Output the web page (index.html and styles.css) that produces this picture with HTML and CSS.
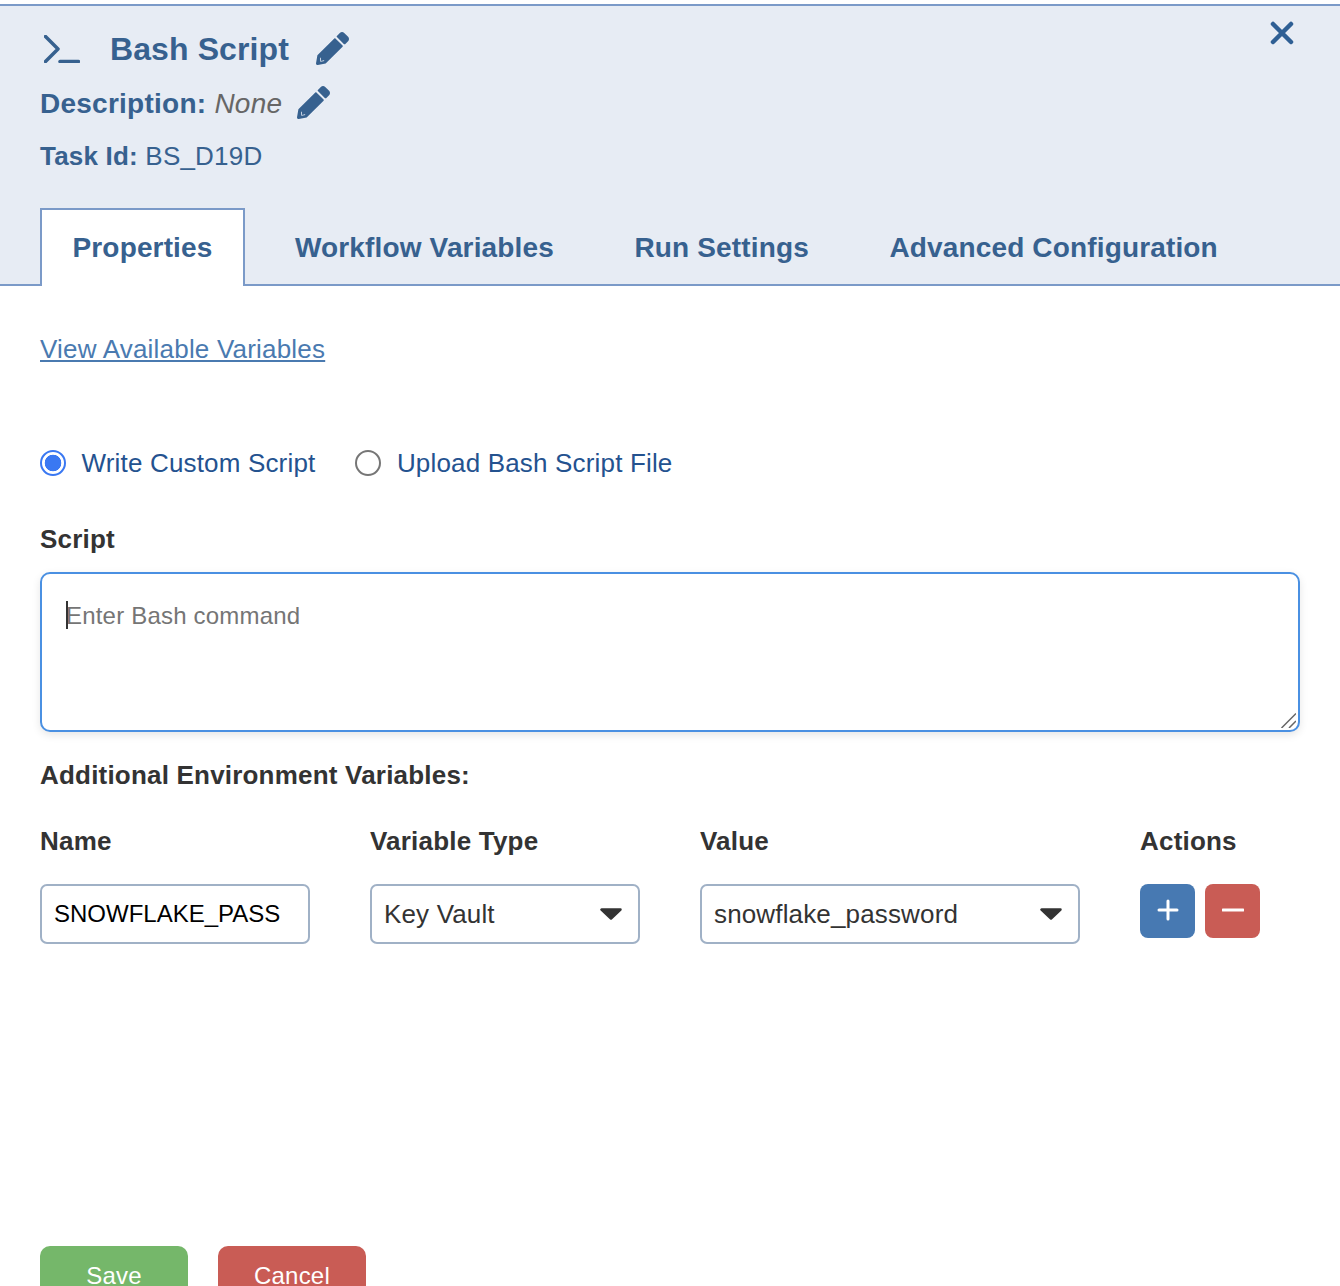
FILE: index.html
```html
<!DOCTYPE html>
<html lang="en">
<head>
<meta charset="utf-8">
<title>Bash Script</title>
<link rel="stylesheet" href="styles.css">
</head>
<body>
<div class="panel">
  <header class="head">
    <svg class="close" viewBox="0 0 24 24" aria-hidden="true"><path d="M3 3L21 21M21 3L3 21"/></svg>
    <div class="title-row">
      <svg class="term" viewBox="0 0 36 28" aria-hidden="true"><path d="M1.500 1.500L14 14L1.500 26.500"/><path d="M16 26.500H34.500"/></svg>
      <h1 class="title">Bash Script</h1>
      <svg class="pencil" viewBox="0 0 512 512" aria-hidden="true"><path fill-rule="evenodd" d="M497.900 142.100l-46.100 46.100c-4.700 4.700-12.300 4.700-17 0l-111-111c-4.700-4.700-4.700-12.300 0-17l46.100-46.100c18.700-18.700 49.100-18.700 67.900 0l60.100 60.100c18.800 18.700 18.800 49.100 0 67.900zM284.200 99.800L21.600 362.400.4 483.900c-2.900 16.400 11.400 30.600 27.800 27.800l121.500-21.300 262.600-262.600c4.700-4.700 4.700-12.300 0-17l-111-111c-4.800-4.700-12.400-4.700-17.100 0zM62 400l6 62 62-12-8-10-42 8-6-50z"/></svg>
    </div>
    <div class="desc-row">
      <span class="desc"><b>Description:</b> <i>None</i></span>
      <svg class="pencil" viewBox="0 0 512 512" aria-hidden="true"><path fill-rule="evenodd" d="M497.900 142.100l-46.100 46.100c-4.700 4.700-12.300 4.700-17 0l-111-111c-4.700-4.700-4.700-12.300 0-17l46.100-46.100c18.700-18.700 49.100-18.700 67.900 0l60.100 60.100c18.800 18.700 18.800 49.100 0 67.900zM284.200 99.800L21.600 362.400.4 483.900c-2.900 16.400 11.400 30.600 27.800 27.800l121.500-21.300 262.600-262.600c4.700-4.700 4.700-12.300 0-17l-111-111c-4.800-4.700-12.400-4.700-17.100 0zM62 400l6 62 62-12-8-10-42 8-6-50z"/></svg>
    </div>
    <div class="task"><b>Task Id:</b> BS_D19D</div>
    <nav class="tabs">
      <a class="tab active">Properties</a>
      <a class="tab">Workflow Variables</a>
      <a class="tab">Run Settings</a>
      <a class="tab">Advanced Configuration</a>
    </nav>
  </header>
  <main class="body">
    <a class="vars-link" href="#">View Available Variables</a>
    <div class="radios">
      <label class="radio"><input type="radio" name="src" checked><span>Write Custom Script</span></label>
      <label class="radio"><input type="radio" name="src"><span>Upload Bash Script File</span></label>
    </div>
    <div class="label script-label">Script</div>
    <div class="script-wrap">
      <textarea class="script" placeholder="Enter Bash command"></textarea>
      <span class="caret"></span>
      <svg class="grip" viewBox="0 0 16 16" aria-hidden="true"><path d="M1.500 16L16 1.500M9 16L16 9"/></svg>
    </div>
    <div class="label env-label">Additional Environment Variables:</div>
    <div class="env-grid">
      <div class="label">Name</div>
      <div class="label">Variable Type</div>
      <div class="label">Value</div>
      <div class="label">Actions</div>
      <input class="field name" type="text" value="SNOWFLAKE_PASS">
      <div class="select">Key Vault<svg class="arrow" viewBox="0 0 24 12" aria-hidden="true"><path d="M2.500 1.500H21.500L12 10.500Z"/></svg></div>
      <div class="select">snowflake_password<svg class="arrow" viewBox="0 0 24 12" aria-hidden="true"><path d="M2.500 1.500H21.500L12 10.500Z"/></svg></div>
      <div class="actions">
        <button class="icon-btn add" aria-label="Add"><svg viewBox="0 0 22 22" aria-hidden="true"><path d="M11 2V20M2 11H20"/></svg></button>
        <button class="icon-btn remove" aria-label="Remove"><svg viewBox="0 0 22 22" aria-hidden="true"><path d="M1 11H21"/></svg></button>
      </div>
    </div>
    <div class="footer">
      <button class="btn save">Save</button>
      <button class="btn cancel">Cancel</button>
    </div>
  </main>
</div>
</body>
</html>
```

FILE: styles.css
```css
* { box-sizing: border-box; }
html, body { margin: 0; height: 1286px; overflow: hidden; background: #fff; }
body { font-family: "Liberation Sans", Arial, sans-serif; font-size: 26px; color: #333; }

.panel { padding-top: 4px; }

.head {
  position: relative;
  height: 282px;
  padding: 0 40px;
  background: #e7ecf4;
  border-top: 2px solid #7b9ac8;
  border-bottom: 2px solid #7b9ac8;
  color: #37618f;
}
.close {
  position: absolute;
  top: 15px;
  right: 46px;
  width: 24px;
  height: 24px;
  fill: none;
  stroke: #2f5f94;
  stroke-width: 4.500;
  stroke-linecap: round;
}
.title-row { display: flex; align-items: center; height: 46px; margin-top: 20px; }
.term {
  width: 36px;
  height: 28px;
  margin: 0 30px 0 4px;
  fill: none;
  stroke: #37618f;
  stroke-width: 3.500;
  stroke-linecap: round;
  stroke-linejoin: round;
}
.title { margin: 0 27px 0 0; font-size: 32px; line-height: 46px; font-weight: 700; letter-spacing: .1px; }
.pencil { width: 33px; height: 33px; margin-bottom: 2px; fill: #37618f; }
.desc-row { display: flex; align-items: center; height: 40px; margin-top: 12px; }
.desc { font-size: 28px; margin-right: 15px; letter-spacing: .25px; }
.desc-row .pencil { margin-bottom: 4px; }
.desc i { color: #666; }
.task { font-size: 26px; line-height: 32px; margin-top: 16px; letter-spacing: .2px; }

.tabs { display: flex; position: absolute; left: 40px; right: 0; bottom: -2px; height: 78px; }
.tab {
  display: flex;
  align-items: center;
  padding: 0 31px;
  margin-right: 14.500px;
  font-size: 28px;
  font-weight: 700;
  letter-spacing: .15px;
  border: 2px solid transparent;
  border-bottom: 0;
}
.tab.active { padding: 0 30.500px; background: #fff; border-color: #7b9ac8; margin-right: 17px; }

.body { padding: 0 40px; }
.vars-link { display: block; margin-top: 46px; font-size: 26px; line-height: 34px; letter-spacing: .2px; color: #4a7ab0; width: max-content; }
.radios { display: flex; gap: 40px; margin-top: 80px; letter-spacing: .17px; }
.radio { display: flex; align-items: center; gap: 15.500px; height: 34px; color: #24528f; }
.radio input {
  appearance: none;
  width: 26px;
  height: 26px;
  margin: 0;
  border: 2px solid #767676;
  border-radius: 50%;
  background: #fff;
}
.radio input:checked {
  border-color: #3a78f2;
  background: radial-gradient(circle, #3a78f2 0 8px, #fff 8.600px);
}
.label { font-weight: 700; font-size: 26px; line-height: 34px; letter-spacing: .2px; color: #333; }
.script-label { margin-top: 42px; }
.script-wrap { position: relative; margin-top: 16px; height: 160px; }
.script {
  display: block;
  width: 100%;
  height: 160px;
  padding: 26px 24px;
  border: 2px solid #4a90e2;
  border-radius: 10px;
  outline: 0;
  resize: none;
  font-family: inherit;
  font-size: 24px;
  letter-spacing: .2px;
  line-height: 32px;
  color: #333;
  box-shadow: 0 3px 8px rgba(0, 0, 0, .1);
}
.script::placeholder { color: #757575; opacity: 1; }
.caret { position: absolute; left: 26px; top: 29px; width: 2px; height: 28px; background: #333; }
.grip { position: absolute; right: 4px; bottom: 4px; width: 16px; height: 16px; fill: none; stroke: #666; stroke-width: 1.500; }
.env-label { margin-top: 26px; }
.env-grid {
  display: grid;
  grid-template-columns: 270px 270px 380px auto;
  column-gap: 60px;
  row-gap: 26px;
  margin-top: 32px;
  align-items: start;
}
.field, .select {
  height: 60px;
  border: 2px solid #a0b1c6;
  border-radius: 7px;
  background: #fff;
  padding: 0 12px;
  font-family: inherit;
  font-size: 26px;
  letter-spacing: .15px;
  color: #333;
}
.field { color: #000; font-size: 24px; letter-spacing: 0; outline: 0; }
.select { display: flex; align-items: center; justify-content: space-between; }
.arrow { width: 24px; height: 12px; margin-right: 3px; fill: #333; stroke: #333; stroke-width: 2.500; stroke-linejoin: round; }
.actions { display: flex; gap: 10px; }
.icon-btn {
  display: flex;
  align-items: center;
  justify-content: center;
  width: 55px;
  height: 54px;
  padding: 0;
  border: 0;
  border-radius: 8px;
}
.icon-btn svg { width: 22px; height: 22px; margin-top: -2px; fill: none; stroke: #fff; stroke-width: 3; stroke-linecap: round; }
.add { background: #4779b2; }
.remove { background: #c95c55; }

.footer { display: flex; gap: 30px; margin-top: 302px; }
.btn {
  width: 148px;
  height: 60px;
  padding: 0;
  border: 0;
  border-radius: 10px;
  font-family: inherit;
  font-size: 24px;
  letter-spacing: .2px;
  color: #fff;
}
.save { background: #75b76a; }
.cancel { background: #c95c55; }
```
